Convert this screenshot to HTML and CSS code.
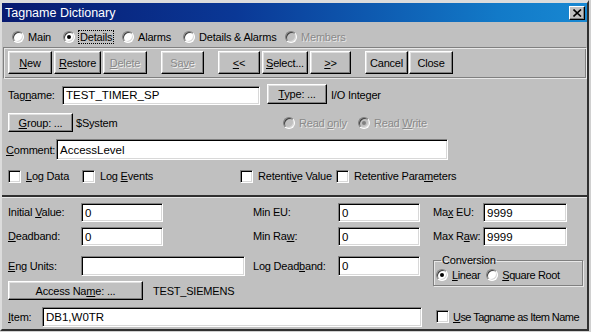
FILE: index.html
```html
<!DOCTYPE html>
<html lang="en">
<head>
    <meta charset="UTF-8">
    <title>Tagname Dictionary</title>
    <link rel="stylesheet" href="styles.css">
</head>
<body>
    <div class="window">
        <div class="titlebar">
            <span class="title">Tagname Dictionary</span>
            <span class="close-btn">
                <svg width="9" height="8" viewBox="0 0 9 8"><path d="M0.5 0.5 L8 7.5 M8 0.5 L0.5 7.5" stroke="#000" stroke-width="1.6"/></svg>
            </span>
        </div>

        <div class="tabs">
            <label class="radio w-main"><span class="dot"></span><span>Main</span></label>
            <label class="radio checked w-details"><span class="dot"></span><span class="focus">Details</span></label>
            <label class="radio w-alarms"><span class="dot"></span><span>Alarms</span></label>
            <label class="radio w-both"><span class="dot"></span><span>Details &amp; Alarms</span></label>
            <label class="radio disabled"><span class="dot"></span><span>Members</span></label>
        </div>

        <div class="toolbar">
            <span class="btn w44"><u>N</u>ew</span>
            <span class="btn w47"><u>R</u>estore</span>
            <span class="btn w44 off"><u>D</u>elete</span>
            <span class="btn w43 off gap">Sa<u>v</u>e</span>
            <span class="btn w42 gap"><u>&lt;</u>&lt;</span>
            <span class="btn w46"><u>S</u>elect...</span>
            <span class="btn w41"><u>&gt;</u>&gt;</span>
            <span class="btn w43 gap">Cancel</span>
            <span class="btn w44 tight">Close</span>
        </div>

        <div class="details">
            <div class="row row-tag">
                <span class="lbl w54">Tag<u>n</u>ame:</span>
                <span class="field tagname">TEST_TIMER_SP</span>
                <span class="btn type-btn"><span><u>T</u>ype: ...</span></span>
                <span>I/O Integer</span>
            </div>
            <div class="row row-group">
                <span class="btn group-btn"><span><u>G</u>roup: ...</span></span>
                <span class="group-name">$System</span>
                <label class="radio disabled w-readonly"><span class="dot"></span><span>Read <u>o</u>nly</span></label>
                <label class="radio disabled checked"><span class="dot"></span><span>Read <u>W</u>rite</span></label>
            </div>
            <div class="row row-comment">
                <span class="lbl w50"><u>C</u>omment:</span>
                <span class="field comment">AccessLevel</span>
            </div>
            <div class="row row-checks">
                <label class="check w-logdata"><span class="box"></span><span><u>L</u>og Data</span></label>
                <label class="check w-logevents"><span class="box"></span><span>Log <u>E</u>vents</span></label>
                <label class="check w-retval"><span class="box"></span><span>Retenti<u>v</u>e Value</span></label>
                <label class="check"><span class="box"></span><span>Retentive Para<u>m</u>eters</span></label>
            </div>
        </div>

        <div class="values">
            <span class="lbl">Initial <u>V</u>alue:</span>
            <span class="field small">0</span>
            <span class="lbl">Min EU:</span>
            <span class="field small">0</span>
            <span class="lbl">Ma<u>x</u> EU:</span>
            <span class="field max">9999</span>

            <span class="lbl"><u>D</u>eadband:</span>
            <span class="field small">0</span>
            <span class="lbl">Min Ra<u>w</u>:</span>
            <span class="field small">0</span>
            <span class="lbl">Max R<u>a</u>w:</span>
            <span class="field max">9999</span>

            <span class="lbl row3"><u>E</u>ng Units:</span>
            <span class="field wide row3"></span>
            <span class="lbl row3">Log Dead<u>b</u>and:</span>
            <span class="field small row3">0</span>
            <fieldset class="conversion">
                <legend>Conversion</legend>
                <label class="radio checked w-linear"><span class="dot"></span><span><u>L</u>inear</span></label>
                <label class="radio"><span class="dot"></span><span><u>S</u>quare Root</span></label>
            </fieldset>

            <div class="access">
                <span class="btn access-btn"><span>Access Na<u>m</u>e: ...</span></span>
                <span>TEST_SIEMENS</span>
            </div>

            <div class="item">
                <span class="lbl w34"><u>I</u>tem:</span>
                <span class="field item-field">DB1,W0TR</span>
            </div>
            <label class="check use-tag"><span class="box"></span><span><u>U</u>se Tagname as Item Name</span></label>
        </div>
    </div>
</body>
</html>
```

FILE: styles.css
```css
:root {
    --face: #c0c0c0;
    --shadow: #808080;
    --dark: #000000;
    --light: #ffffff;
}

body {
    margin: 0;
    background: #d0d0d0;
    font-family: 'Liberation Sans', Arial, sans-serif;
    font-size: 11px;
    letter-spacing: -0.2px;
    color: #000;
}

u {
    text-decoration: underline;
    text-underline-offset: 1px;
}

.window {
    box-sizing: border-box;
    width: 589px;
    height: 331px;
    background: var(--face);
    border-top: 3px solid #dcdcdc;
    border-left: 2px solid #dcdcdc;
    border-right: 2px solid #303030;
    border-bottom: 2px solid #303030;
}

.titlebar {
    height: 19px;
    display: flex;
    align-items: center;
    justify-content: space-between;
    padding: 0 2px 0 3px;
    background: linear-gradient(90deg, #081a70 0%, #0a3896 40%, #127ac8 85%, #1888d2 100%);
}

.title {
    color: #fff;
    font-size: 12.5px;
    letter-spacing: 0;
}

.close-btn {
    box-sizing: border-box;
    width: 16px;
    height: 14px;
    display: flex;
    align-items: center;
    justify-content: center;
    background: var(--face);
    border: 1px solid;
    border-color: #fff #000 #000 #fff;
    box-shadow: inset -1px -1px var(--shadow);
}

/* radio buttons and check boxes */
.radio, .check {
    display: flex;
    align-items: center;
    white-space: nowrap;
}

.dot {
    box-sizing: border-box;
    width: 12px;
    height: 12px;
    margin-right: 4px;
    border-radius: 50%;
    background: #fff;
    border: 1px solid;
    border-color: var(--shadow) #fff #fff var(--shadow);
    box-shadow: inset 1px 1px #404040, inset -1px -1px #d8d8d8;
    display: flex;
    align-items: center;
    justify-content: center;
    flex: none;
}

.radio.checked .dot::after {
    content: '';
    width: 4px;
    height: 4px;
    border-radius: 50%;
    background: #000;
}

.radio.disabled {
    color: #8a8a8a;
    text-shadow: 1px 1px #e8e8e8;
}

.radio.disabled .dot {
    background: var(--face);
}

.radio.disabled.checked .dot::after {
    background: #808080;
}

.box {
    box-sizing: border-box;
    width: 13px;
    height: 13px;
    margin-right: 5px;
    background: #fff;
    border: 1px solid;
    border-color: var(--shadow) #fff #fff var(--shadow);
    box-shadow: inset 1px 1px #000, inset -1px -1px #d8d8d8;
    flex: none;
}

.focus {
    outline: 1px dotted #000;
    outline-offset: 0;
    padding: 0 1px;
}

.tabs {
    box-sizing: border-box;
    height: 25px;
    padding: 5px 0 0 10px;
    display: flex;
    align-items: center;
}

.w-main { width: 51px; }
.w-details { width: 59px; }
.w-alarms { width: 61px; }
.w-both { width: 102px; }

/* buttons */
.btn {
    box-sizing: border-box;
    height: 23px;
    display: inline-flex;
    align-items: center;
    justify-content: center;
    background: var(--face);
    border: 1px solid;
    border-color: #fff #000 #000 #fff;
    box-shadow: inset -1px -1px var(--shadow), inset 1px 1px #e0e0e0;
    white-space: nowrap;
    flex: none;
}

.btn.off {
    color: #8a8a8a;
    text-shadow: 1px 1px #f0f0f0;
}

.toolbar {
    box-sizing: border-box;
    height: 32px;
    margin: 0 0 0 1px;
    padding: 3px 0 0 4px;
    display: flex;
    gap: 2px;
    border: 1px solid var(--shadow);
    border-right-color: #e8e8e8;
    border-bottom-color: #e8e8e8;
    box-shadow: inset 1px 1px #e8e8e8, inset -1px -1px var(--shadow);
}

.toolbar .gap { margin-left: 12px; }
.toolbar .tight { margin-left: -1px; }

.w41 { width: 41px; }
.w42 { width: 42px; }
.w43 { width: 43px; }
.w44 { width: 44px; }
.w46 { width: 46px; }
.w47 { width: 47px; }

/* sunken text fields */
.field {
    box-sizing: border-box;
    height: 19px;
    display: flex;
    align-items: center;
    padding-left: 3px;
    background: #fff;
    border: 1px solid;
    border-color: var(--shadow) #fff #fff var(--shadow);
    box-shadow: inset 1px 1px #000, inset -1px -1px #d8d8d8;
    font-size: 11.5px;
    letter-spacing: 0;
}

.details {
    padding-left: 6px;
    height: 111px;
    border-bottom: 2px solid #303030;
    box-shadow: 0 1px #e8e8e8;
}

.row {
    display: flex;
    align-items: center;
}

.lbl { flex: none; }
.w34 { width: 34px; }
.w50 { width: 50px; }
.w54 { width: 54px; }

.row-tag { height: 22px; margin-top: 5px; }
.tagname { width: 198px; height: 19px; margin-right: 7px; }
.type-btn { width: 60px; height: 20px; margin-right: 4px; align-self: flex-start; }

.row-group { height: 19px; margin-top: 7px; }
.group-btn { width: 65px; height: 19px; margin-right: 3px; }
.group-name { width: 207px; }
.w-readonly { width: 75px; }

.row-comment { height: 21px; margin-top: 7px; margin-left: -2px; }
.comment { width: 392px; height: 21px; }

.row-checks { height: 14px; margin-top: 9px; }
.w-logdata { width: 74px; }
.w-logevents { width: 158px; }
.w-retval { width: 96px; }

/* lower half: values */
.values {
    display: grid;
    grid-template-columns: 73px 172px 85px 95px 50px 1fr;
    grid-template-rows: 24px 29px 25px 26px 20px;
    align-items: start;
    padding: 6px 0 0 6px;
}

.values .lbl {
    line-height: 19px;
}

.values .row3 {
    height: 20px;
    line-height: 20px;
}

.small { width: 82px; }
.max { width: 84px; }
.wide { width: 164px; }

.conversion {
    grid-column: 5 / 7;
    grid-row: 3 / 5;
    box-sizing: border-box;
    width: 150px;
    height: 30px;
    margin: 0;
    padding: 0 0 0 2px;
    display: flex;
    align-items: center;
    letter-spacing: -0.4px;
    border: 1px solid var(--shadow);
    box-shadow: 1px 1px #e8e8e8, inset 1px 1px #e8e8e8;
}

.conversion legend {
    padding: 0 1px;
    margin-left: 5px;
    line-height: 9px;
    letter-spacing: -0.2px;
}

.w-linear { margin-right: 6px; }

.access {
    grid-column: 1 / 4;
    display: flex;
    align-items: center;
    gap: 10px;
}

.access-btn { width: 135px; height: 19px; }

.item {
    grid-column: 1 / 5;
    display: flex;
    align-items: center;
}

.item-field { width: 380px; height: 20px; }

.use-tag {
    grid-column: 5 / 7;
    margin: 3px 0 0 3px;
    letter-spacing: -0.55px;
}

.use-tag .box { margin-right: 4px; }
```
